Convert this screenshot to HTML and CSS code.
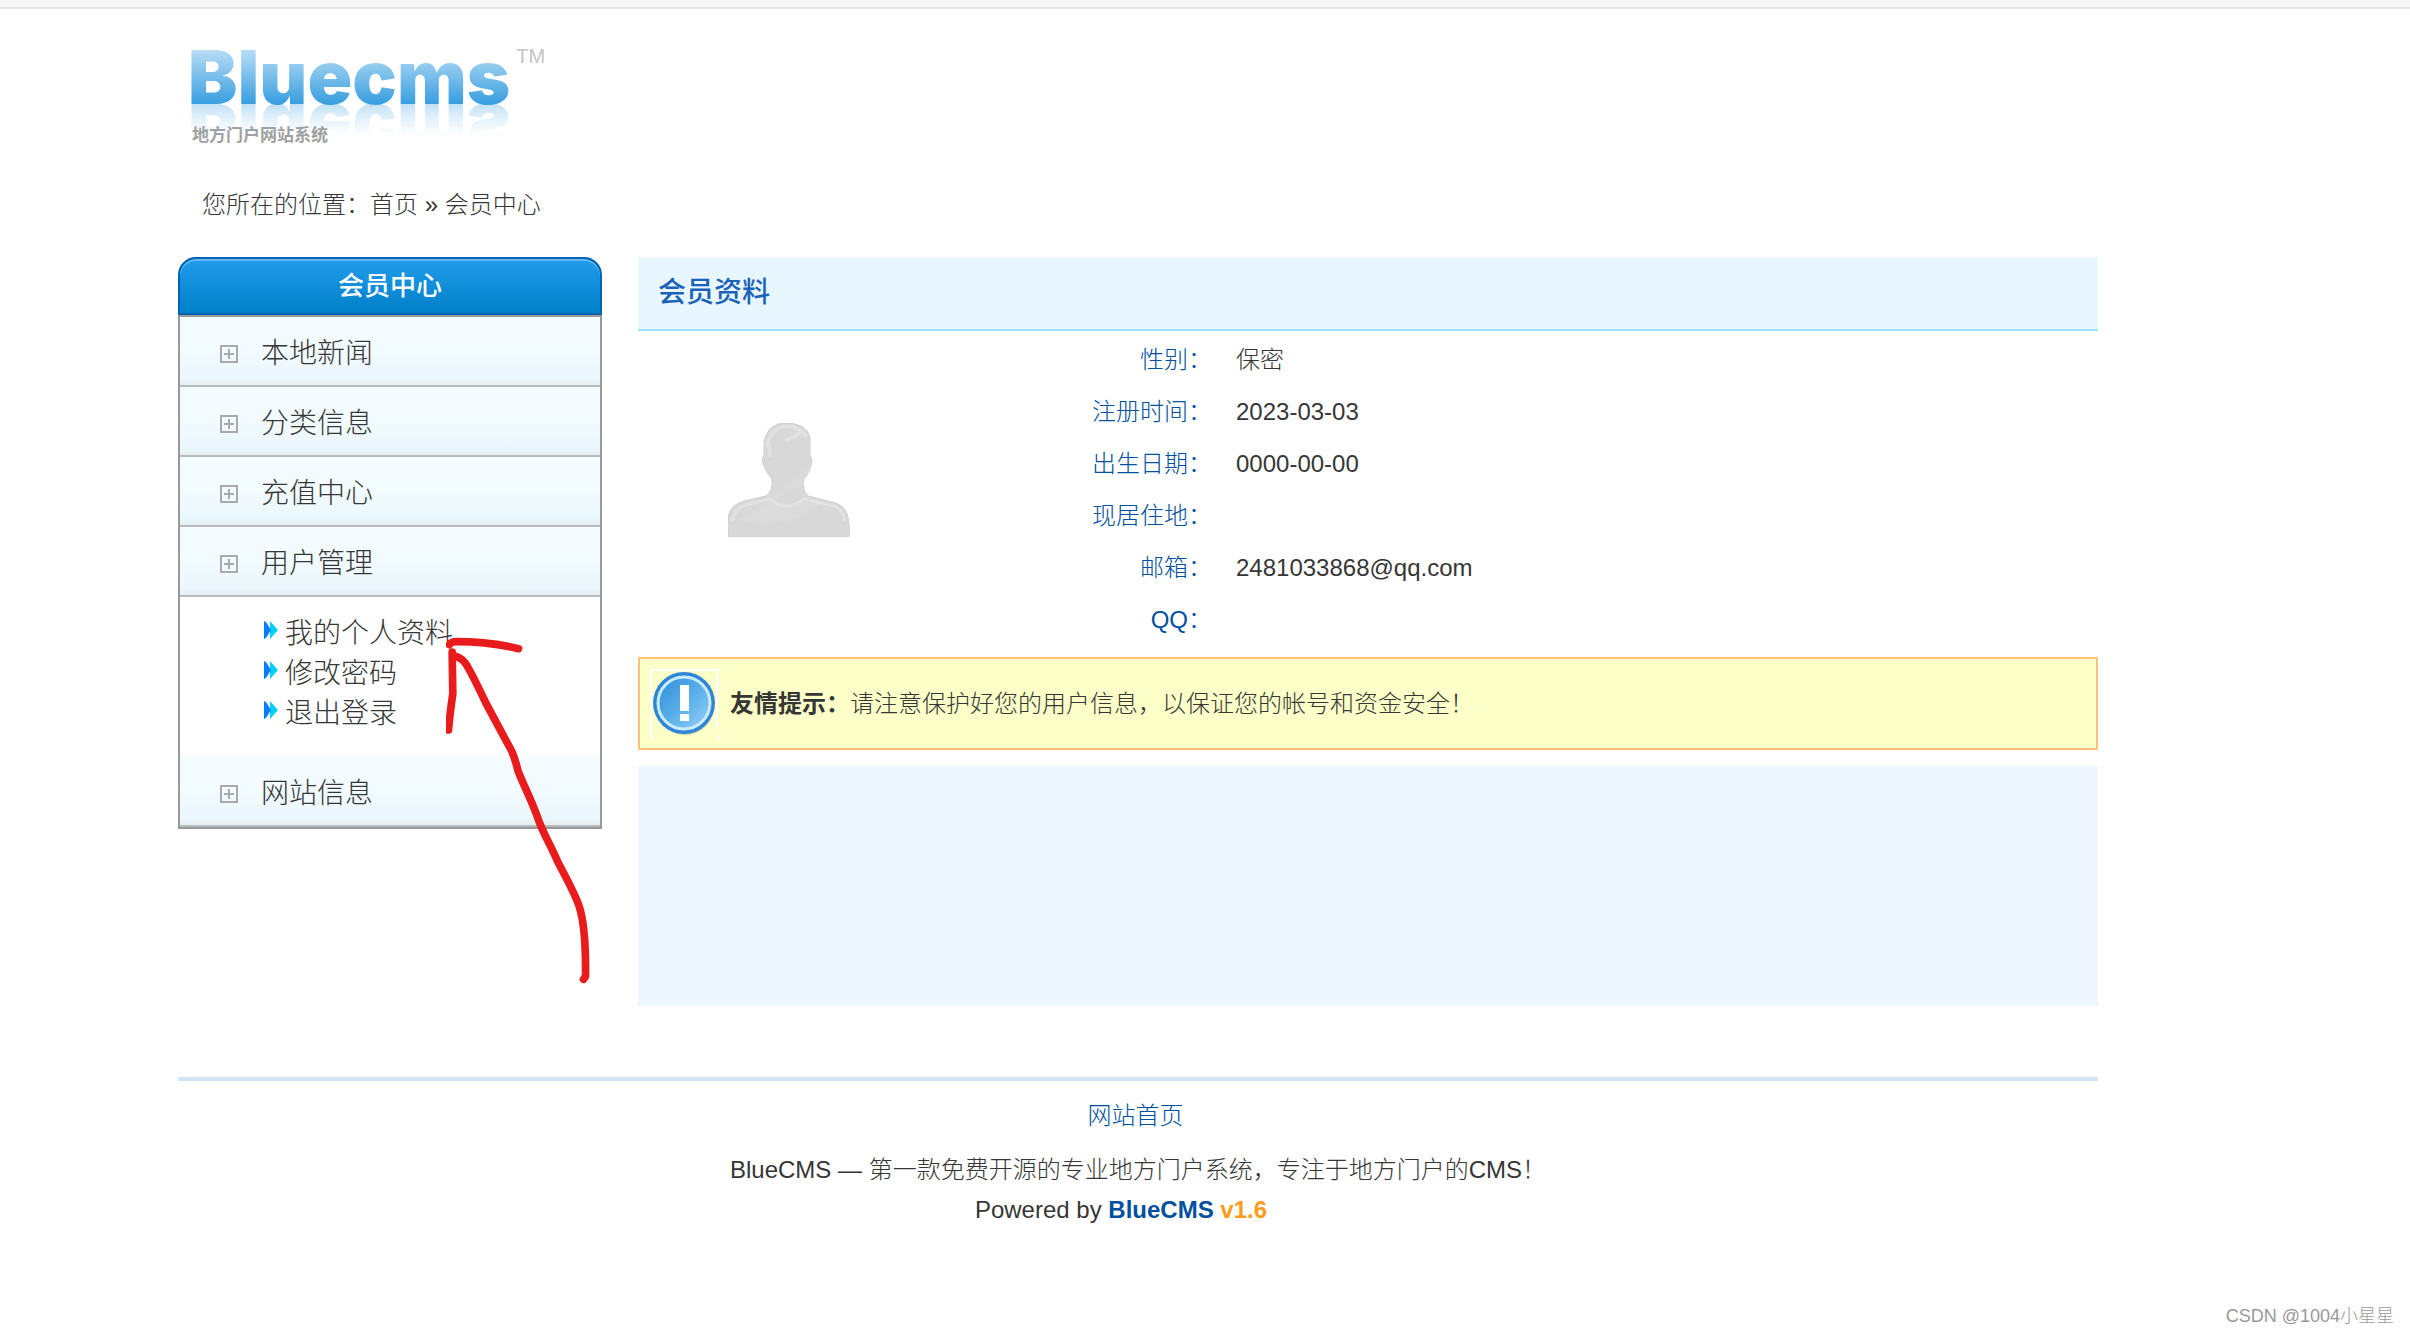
FILE: index.html
```html
<!DOCTYPE html>
<html lang="zh-CN">
<head>
<meta charset="utf-8">
<title>会员中心 - BlueCMS</title>
<link rel="stylesheet" href="styles.css">
</head>
<body>
<div class="topbar"></div>
<div class="page">
  <header class="logo">
    <div class="logo-row"><span class="logo-word">Bluecms</span><span class="logo-tm">TM</span></div>
    <div class="logo-sub">地方门户网站系统</div>
  </header>
  <nav class="crumbs">您所在的位置：<a href="#">首页</a> » 会员中心</nav>

  <div class="columns">
    <aside class="side">
      <h2 class="side-title">会员中心</h2>
      <ul class="menu">
        <li><a class="group" href="#"><svg class="plus" viewBox="0 0 18 18"><path d="M1 1h16v16H1zM4 9h10M9 4v10"/></svg>本地新闻</a></li>
        <li><a class="group" href="#"><svg class="plus" viewBox="0 0 18 18"><path d="M1 1h16v16H1zM4 9h10M9 4v10"/></svg>分类信息</a></li>
        <li><a class="group" href="#"><svg class="plus" viewBox="0 0 18 18"><path d="M1 1h16v16H1zM4 9h10M9 4v10"/></svg>充值中心</a></li>
        <li><a class="group" href="#"><svg class="plus" viewBox="0 0 18 18"><path d="M1 1h16v16H1zM4 9h10M9 4v10"/></svg>用户管理</a>
          <ul class="sub">
            <li><a href="#"><svg class="arrow" viewBox="0 0 14 18"><path fill="#00d0ff" d="M6 0l8 9-8 9z"/><path fill="#0a7cff" d="M0 0l2 1 5 8-5 8-2 1z"/></svg>我的个人资料</a></li>
            <li><a href="#"><svg class="arrow" viewBox="0 0 14 18"><path fill="#00d0ff" d="M6 0l8 9-8 9z"/><path fill="#0a7cff" d="M0 0l2 1 5 8-5 8-2 1z"/></svg>修改密码</a></li>
            <li><a href="#"><svg class="arrow" viewBox="0 0 14 18"><path fill="#00d0ff" d="M6 0l8 9-8 9z"/><path fill="#0a7cff" d="M0 0l2 1 5 8-5 8-2 1z"/></svg>退出登录</a></li>
          </ul>
        </li>
        <li><a class="group" href="#"><svg class="plus" viewBox="0 0 18 18"><path d="M1 1h16v16H1zM4 9h10M9 4v10"/></svg>网站信息</a></li>
      </ul>
    </aside>

    <main class="main">
      <h1 class="main-title">会员资料</h1>
      <table class="profile">
        <tr>
          <td class="avatar" rowspan="6">
            <svg width="122" height="114" viewBox="0 0 122 114" aria-label="头像">
              <defs><clipPath id="body"><path d="M0 114V94Q2 82 16 78L38 73Q45 68 44 56Q38 50 34 38L36 32V18Q40 0 58 0Q78 0 82 14V32L84 38Q82 50 76 56Q74 68 80 73L104 79Q118 82 120 94L122 112L120 114Z"/></clipPath></defs>
              <path fill="#d8d8d8" stroke="#d0d0d0" d="M0 114V94Q2 82 16 78L38 73Q45 68 44 56Q38 50 34 38L36 32V18Q40 0 58 0Q78 0 82 14V32L84 38Q82 50 76 56Q74 68 80 73L104 79Q118 82 120 94L122 112L120 114Z"/>
              <g clip-path="url(#body)">
                <path fill="#dedede" d="M20 100Q64 106 94 79L76 74Q60 90 44 74L84 40V56L10 96Z" opacity=".6"/>
                <path fill="none" stroke="#e2e2e2" stroke-width="3" d="M38 24Q44 3 60 3Q72 4 79 14M57 17Q68 15 74 7M42 20Q41 24 42 34M4 98Q6 86 18 82L42 76Q58 90 76 76L106 83Q114 86 117 98"/>
              </g>
            </svg>
          </td>
          <th scope="row">性别：</th><td>保密</td>
        </tr>
        <tr><th scope="row">注册时间：</th><td>2023-03-03</td></tr>
        <tr><th scope="row">出生日期：</th><td>0000-00-00</td></tr>
        <tr><th scope="row">现居住地：</th><td></td></tr>
        <tr><th scope="row">邮箱：</th><td>2481033868@qq.com</td></tr>
        <tr><th scope="row">QQ：</th><td></td></tr>
      </table>
      <div class="notice">
        <svg width="70" height="70" viewBox="0 0 70 70">
          <defs><linearGradient id="disc" x1="0" y1="0" x2="1" y2="1"><stop offset="0" stop-color="#2f8edb"/><stop offset=".5" stop-color="#58ade8"/><stop offset="1" stop-color="#9ad4f7"/></linearGradient></defs>
          <path fill="none" stroke="#fff" stroke-width="2" d="M1 70V1H70M67 4V58M69 66V70"/>
          <ellipse cx="35" cy="37" rx="29" ry="29" fill="#8a9a78" opacity=".45"/>
          <circle cx="34" cy="34" r="31" fill="#2f86d6"/>
          <circle cx="34" cy="34" r="26" fill="url(#disc)" stroke="#c9ebff" stroke-width="3"/>
          <path fill="#fff" d="M30 16h9v26h-9zM30 45h9v7h-9z"/>
        </svg>
        <p><strong>友情提示：</strong>请注意保护好您的用户信息，以保证您的帐号和资金安全！</p>
      </div>
      <div class="banner"></div>
    </main>

    <svg class="pointer" viewBox="860 290 440 1050" fill="none" stroke="#e81c1c" stroke-width="23" stroke-linecap="round" stroke-linejoin="round">
      <path d="M1272 1317L1278 1308Q1280 1160 1258 1095Q1246 1060 1195 965C1170 905 1150 880 1134 830C1110 765 1090 730 1075 690Q1068 660 1058 635L980 490Q945 415 922 375Q910 355 890 348"/>
      <path d="M870 313Q875 304 890 304Q990 304 1077 325"/>
      <path d="M878 335L880 460Q870 530 867 569"/>
    </svg>
  </div>

  <footer class="footer">
    <p class="home"><a href="#">网站首页</a></p>
    <p>BlueCMS — 第一款免费开源的专业地方门户系统，专注于地方门户的CMS！</p>
    <p class="powered">Powered by <a class="brand" href="#">BlueCMS</a> <b class="version">v1.6</b></p>
  </footer>
</div>
<div class="watermark">CSDN @1004小星星</div>
</body>
</html>
```
FILE: styles.css
```css
* { box-sizing: border-box; }
body {
  margin: 0;
  background: #fff;
  color: #363636;
  font: 24px/40px "Liberation Sans", "Noto Sans CJK SC", sans-serif;
  font-weight: 300;
}
h1, h2, p, ul { margin: 0; padding: 0; }
ul { list-style: none; }
a { color: inherit; text-decoration: none; }

.topbar { height: 9px; background: #f7f7f7; border-bottom: 2px solid #e4e4e4; }
.page { max-width: 2098px; padding-left: 178px; }

.logo { height: 159px; padding: 32px 0 0 10px; }
.logo-row { display: flex; align-items: flex-start; gap: 6px; height: 80px; }
.logo-word {
  font: 900 74px/72px Inter, sans-serif;
  color: transparent;
  background: linear-gradient(#b5dcf5 10px, #3a9fe0 62px);
  background-clip: text;
  -webkit-background-clip: text;
  -webkit-box-reflect: below -18px linear-gradient(transparent 42%, rgba(0, 0, 0, .3) 86%);
}
.logo-tm { color: #c4c4c4; font-size: 20px; line-height: 30px; }
.logo-sub { padding-left: 4px; color: #a0a0a0; font-size: 17px; font-weight: 700; line-height: 30px; }

.crumbs { padding: 17px 24px 32px; line-height: 40px; }

.columns { position: relative; display: flex; align-items: flex-start; gap: 36px; }
.side { flex: 0 0 424px; }
.side-title {
  height: 58px;
  border: 2px solid #0062b0;
  border-radius: 18px 18px 0 0;
  background: linear-gradient(#229cec, #0080c8);
  box-shadow: inset 0 2px 0 #60b8f4;
  color: #fff;
  font-size: 26px;
  font-weight: 500;
  line-height: 54px;
  text-align: center;
}
.menu { border: 2px solid #999; font-size: 28px; }
.group {
  display: flex;
  align-items: center;
  gap: 23px;
  height: 70px;
  padding: 5px 0 0 40px;
  border-bottom: 2px solid #b8bcbe;
  background: linear-gradient(#f5fcff, #f2fbff 50%, #eaf7fc 90%, #e6eff0);
}
.plus { width: 18px; height: 18px; fill: none; stroke: #aaa; stroke-width: 2; }
.sub { padding: 17px 0 23px 84px; }
.sub a { display: flex; align-items: flex-start; gap: 7px; }
.arrow { width: 14px; height: 18px; margin-top: 7px; }

.main { flex: 1; min-width: 0; }
.main-title {
  height: 74px;
  padding-left: 20px;
  border-bottom: 2px solid #9fe0fc;
  background: #e8f7ff;
  color: #1b62b8;
  font-size: 28px;
  font-weight: 500;
  line-height: 72px;
}
.profile { width: 100%; margin: 3px 0 11px; border-collapse: collapse; table-layout: fixed; }
.profile th, .profile td { height: 52px; padding: 0; text-align: left; }
.profile th { width: 272px; color: #00509f; font-weight: 300; text-align: right; }
.profile td { padding-left: 24px; }
.profile .avatar { width: 302px; padding: 0 0 20px; text-align: center; vertical-align: middle; }
.avatar svg { vertical-align: middle; }

.notice {
  display: flex;
  align-items: center;
  gap: 10px;
  height: 93px;
  padding-left: 10px;
  border: 2px solid #ffc080;
  background: #fcffc8;
}
.notice strong { font-weight: 700; }
.banner { height: 240px; margin-top: 16px; background: #eef6fe; }

.pointer { position: absolute; left: 268px; top: 380px; width: 147px; height: 350px; }

.footer { margin-top: 71px; padding-top: 15px; border-top: 4px solid #d0e6f5; text-align: center; }
.home { margin-bottom: 14px; padding-right: 5px; color: #00509f; }
.powered { padding-right: 34px; }
.brand { color: #00509f; font-weight: 700; }
.version { color: #ff9c20; font-weight: 700; }

.watermark {
  position: absolute;
  right: 16px;
  bottom: 0;
  color: #999;
  font-size: 18px;
  line-height: 36px;
}
```
